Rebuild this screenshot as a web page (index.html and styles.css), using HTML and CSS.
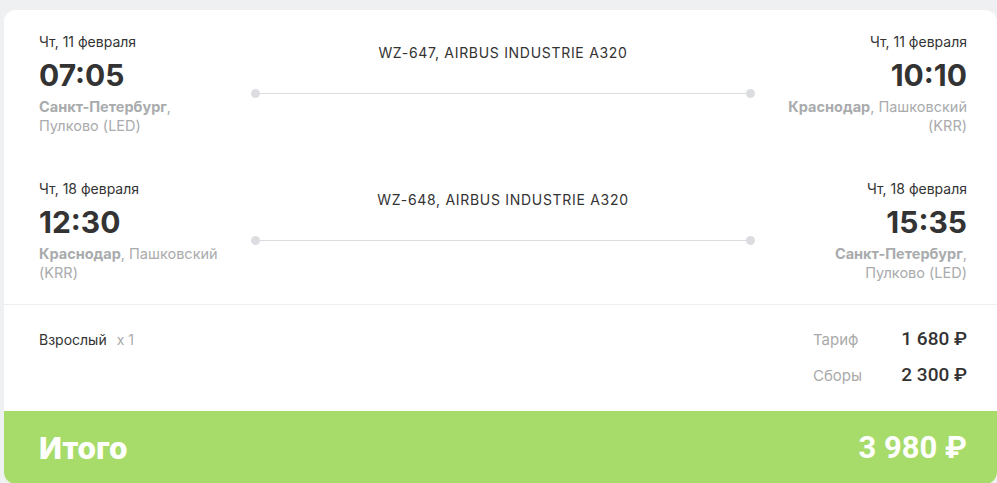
FILE: index.html
```html
<!DOCTYPE html>
<html lang="ru">
<head>
    <meta charset="UTF-8">
    <title>Бронирование</title>
    <link rel="stylesheet" href="styles.css">
</head>
<body>
    <div class="card">
        <div class="flights">
            <div class="flight">
                <div class="point">
                    <div class="date">Чт, 11 февраля</div>
                    <div class="time">07:05</div>
                    <div class="place"><b>Санкт-Петербург</b>,<br>Пулково (LED)</div>
                </div>
                <div class="route">
                    <div class="board">WZ-647, AIRBUS INDUSTRIE A320</div>
                    <div class="line"></div>
                </div>
                <div class="point right">
                    <div class="date">Чт, 11 февраля</div>
                    <div class="time">10:10</div>
                    <div class="place"><b>Краснодар</b>, Пашковский<br>(KRR)</div>
                </div>
            </div>
            <div class="flight">
                <div class="point">
                    <div class="date">Чт, 18 февраля</div>
                    <div class="time">12:30</div>
                    <div class="place"><b>Краснодар</b>, Пашковский<br>(KRR)</div>
                </div>
                <div class="route">
                    <div class="board">WZ-648, AIRBUS INDUSTRIE A320</div>
                    <div class="line"></div>
                </div>
                <div class="point right">
                    <div class="date">Чт, 18 февраля</div>
                    <div class="time">15:35</div>
                    <div class="place"><b>Санкт-Петербург</b>,<br>Пулково (LED)</div>
                </div>
            </div>
        </div>

        <div class="prices">
            <div class="passenger">Взрослый <span class="count">x 1</span></div>
            <div class="fares">
                <div class="fare-row">
                    <span class="fare-label">Тариф</span>
                    <span class="fare-value">1 680 ₽</span>
                </div>
                <div class="fare-row">
                    <span class="fare-label">Сборы</span>
                    <span class="fare-value">2 300 ₽</span>
                </div>
            </div>
        </div>

        <div class="total">
            <span class="total-label">Итого</span>
            <span class="total-value">3 980 ₽</span>
        </div>
    </div>
</body>
</html>
```

FILE: styles.css
```css
body {
    margin: 0;
    padding: 10px 0 0 4px;
    background-color: #eef0f2;
    font-family: 'Inter', 'Noto Sans', sans-serif;
    color: #333;
}
.card {
    background: white;
    border-radius: 12px;
    overflow: hidden;
}
.flights {
    padding: 22px 30px 22px 35px;
    display: flex;
    flex-direction: column;
    gap: 44px;
}
.flight {
    display: grid;
    grid-template-columns: 1fr 506px 1fr;
}
.point {
    display: flex;
    flex-direction: column;
}
.point.right {
    text-align: right;
}
.date {
    font-size: 14px;
    line-height: 20px;
}
.time {
    font-size: 30px;
    font-weight: 700;
    line-height: 34px;
    margin-top: 6px;
    margin-bottom: 5px;
}
.place {
    font-size: 14.5px;
    line-height: 19px;
    color: #a9abad;
}
.place b {
    font-weight: 700;
}
.route {
    display: flex;
    flex-direction: column;
    align-items: center;
}
.board {
    margin-top: 11px;
    font-size: 14px;
    line-height: 20px;
    letter-spacing: 0.7px;
}
.line {
    position: relative;
    margin-top: 30px;
    width: 496px;
    height: 1px;
    background: #dcdde0;
}
.line::before,
.line::after {
    content: '';
    position: absolute;
    top: -4px;
    width: 9px;
    height: 9px;
    border-radius: 50%;
    background: #dcdde0;
}
.line::before {
    left: -4px;
}
.line::after {
    right: -4px;
}
.prices {
    border-top: 1px solid #efefef;
    display: flex;
    justify-content: space-between;
    padding: 23px 30px 25px 35px;
}
.passenger {
    font-size: 14px;
    line-height: 22px;
    margin-top: 1px;
}
.count {
    color: #aaa;
    margin-left: 6px;
}
.fares {
    display: flex;
    flex-direction: column;
    gap: 14px;
}
.fare-row {
    display: flex;
    align-items: center;
    justify-content: space-between;
    width: 154px;
}
.fare-label {
    font-size: 15px;
    color: #aaa;
}
.fare-value {
    font-family: 'Roboto', sans-serif;
    font-size: 19px;
    font-weight: 500;
    line-height: 22px;
}
.total {
    background: #a8dc6a;
    height: 73px;
    display: flex;
    align-items: center;
    justify-content: space-between;
    padding: 0 30px 0 35px;
    color: white;
}
.total-label {
    font-size: 30px;
    font-weight: 800;
}
.total-value {
    font-family: 'Roboto', sans-serif;
    font-size: 31px;
    font-weight: 700;
}
```
